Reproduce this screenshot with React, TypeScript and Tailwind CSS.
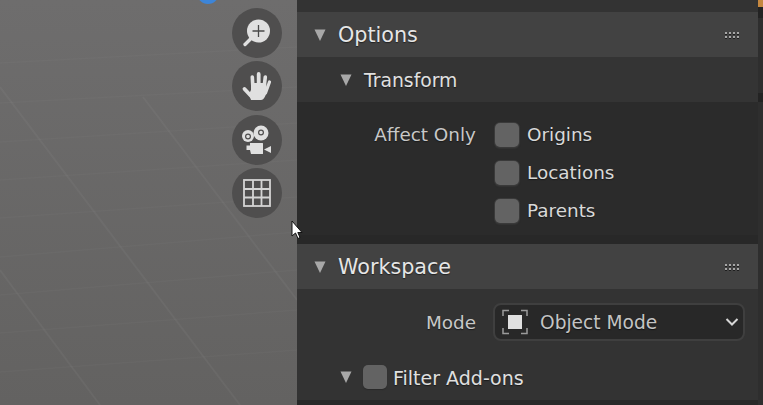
const Tri = () => (
  <svg width="12" height="12" viewBox="0 0 12 12" className="shrink-0">
    <path d="M0.5 0.5 H11.5 L6 12 Z" fill="#a8a8a8" />
  </svg>
);

const Grip = () => (
  <svg width="15" height="8" viewBox="0 0 15 8" className="shrink-0 mt-[2px]">
    {[0, 4, 8, 12].map((x) => (
      <g key={x}>
        <rect x={x} y="0" width="2" height="2" fill="#a6a6a6" />
        <rect x={x} y="2" width="2" height="1" fill="#1e1e1e" />
        <rect x={x} y="4" width="2" height="2" fill="#a6a6a6" />
        <rect x={x} y="6" width="2" height="1" fill="#1e1e1e" />
      </g>
    ))}
  </svg>
);

const Check = ({ ring = true }: { ring?: boolean }) => (
  <span
    className={
      ring
        ? "block w-[24px] h-[24px] shrink-0 rounded-[5px] bg-[#636363] shadow-[0_0_0_1px_#3a3a3a,0_1px_1px_1px_#333333]"
        : "block w-[24px] h-[24px] shrink-0 rounded-[5px] bg-[#636363] shadow-[0_1px_1px_0_#2a2a2a]"
    }
  />
);

const PanelHeader = ({ title }: { title: string }) => (
  <div className="h-[45px] bg-[#424242] flex items-center pl-[17px] pr-[18px]">
    <Tri />
    <span className="ml-[12px] mt-[2px] text-[20.7px] text-[#e6e6e6] [text-shadow:0_1px_1px_#222222]">{title}</span>
    <span className="ml-auto flex"><Grip /></span>
  </div>
);

const CheckRow = ({ label }: { label: string }) => (
  <div className="h-[38px] flex items-center pl-[1px]">
    <Check />
    <span className="ml-[8px] text-[18.4px] text-[#d9d9d9] [text-shadow:0_1px_1px_#1a1a1a]">{label}</span>
  </div>
);

const Nav = ({ children }: { children: React.ReactNode }) => (
  <div className="w-[50px] h-[50px] rounded-full bg-[#4f4e4e] flex items-center justify-center">{children}</div>
);

const hLines = [
  [0, 63, 297, 47], [0, 103, 297, 87], [0, 142, 297, 123], [0, 180, 297, 160], [0, 218, 297, 197],
  [0, 257, 297, 232], [0, 295, 297, 270], [0, 333, 297, 310], [0, 372, 297, 350],
];
const dLines = [
  [0, 87, 240, 405], [0, 270, 100, 405], [143, 97, 297, 300],
];

export default function App() {
  return (
    <div className="w-[763px] h-[405px] flex overflow-hidden font-['DejaVu_Sans',sans-serif]">
      <div className="relative w-[297px] h-full bg-gradient-to-b from-[#6e6d6d] to-[#636261]">
        <svg width="297" height="405" className="absolute inset-0">
          {hLines.map((l, i) => (
            <line key={i} x1={l[0]} y1={l[1]} x2={l[2]} y2={l[3]} stroke="#ffffff" strokeOpacity="0.025" strokeWidth="1.5" />
          ))}
          {dLines.map((l, i) => (
            <line key={i} x1={l[0]} y1={l[1]} x2={l[2]} y2={l[3]} stroke="#ffffff" strokeOpacity="0.04" strokeWidth="2" />
          ))}
        </svg>
        <div className="absolute left-[197px] top-[-18px] w-[22px] h-[22px] rounded-full bg-[#3d85d8]" />
        <div className="absolute left-[232px] top-[8px] flex flex-col gap-[3.33px]">
          <Nav>
            <svg width="32" height="32" viewBox="0 0 32 32">
              <circle cx="17.5" cy="14" r="11.5" fill="#e0e0e0" />
              <path d="M10 21.5 L4 27.5" stroke="#e0e0e0" strokeWidth="3.4" strokeLinecap="round" />
              <path d="M17.5 8 V20 M11.5 14 H23.5" stroke="#4a4a4a" strokeWidth="1.3" />
            </svg>
          </Nav>
          <Nav>
            <svg width="32" height="32" viewBox="0 0 32 32" fill="none" stroke="#e0e0e0" strokeLinecap="round">
              <path d="M10 30 H20 C23 30 25 25 26 21 L25 13 H10 L10 20 L8 24 Z" fill="#e0e0e0" stroke="none" />
              <path d="M12 19 L11.3 7" strokeWidth="3.6" />
              <path d="M17.7 18 V4" strokeWidth="3.8" />
              <path d="M23 18 L24.3 7" strokeWidth="3.6" />
              <path d="M3.5 19 L11 27" strokeWidth="3.8" />
              <path d="M24.5 23 L28.5 12" strokeWidth="3.2" />
            </svg>
          </Nav>
          <Nav>
            <svg width="30" height="30" viewBox="0 0 30 30">
              <circle cx="6" cy="11" r="6" fill="#e0e0e0" />
              <circle cx="19" cy="8" r="7.5" fill="#e0e0e0" />
              <circle cx="6" cy="11.5" r="2.4" fill="none" stroke="#4f4e4e" strokeWidth="1.2" />
              <circle cx="19" cy="7.5" r="2.4" fill="none" stroke="#4f4e4e" strokeWidth="1.2" />
              <path d="M8 18 H20.5 A0.5 0.5 0 0 1 21 18.5 V28.5 A0.5 0.5 0 0 1 20.5 29 H9 L8 25 H4.5 V20.5 H8 Z" fill="#e0e0e0" />
              <path d="M29 21 V28 L22 24.5 Z" fill="#e0e0e0" />
            </svg>
          </Nav>
          <Nav>
            <svg width="28" height="28" viewBox="0 0 28 28" fill="none" stroke="#d4d4d4" strokeWidth="1.8">
              <rect x="1" y="1" width="26" height="26" />
              <path d="M10 1 V27 M18.5 1 V27 M1 10 H27 M1 18.5 H27" />
            </svg>
          </Nav>
        </div>
        <svg width="12" height="20" viewBox="0 0 12 20" className="absolute left-[291px] top-[220px]">
          <path d="M1 1 V16 L4.5 13 L7 18.5 L9 17.5 L6.8 12.5 H11 Z" fill="#ffffff" stroke="#111111" strokeWidth="1" />
        </svg>
      </div>

      <div className="flex-1 h-full flex bg-[#282828]">
        <div className="flex-1 flex flex-col">
          <div className="h-[12px] bg-[#333333]" />
          <PanelHeader title="Options" />
          <div className="h-[45px] bg-[#343434] flex items-center pl-[43px]">
            <Tri />
            <span className="ml-[12px] mt-[3px] text-[18.8px] text-[#e0e0e0] [text-shadow:0_1px_1px_#1a1a1a]">Transform</span>
          </div>
          <div className="h-[133px] bg-[#2b2b2b] flex pt-[14px]">
            <div className="w-[179px] h-[38px] flex items-center justify-end text-[18.4px] text-[#c8c8c8] [text-shadow:0_1px_1px_#1a1a1a]">Affect Only</div>
            <div className="ml-[18px] flex flex-col">
              <CheckRow label="Origins" />
              <CheckRow label="Locations" />
              <CheckRow label="Parents" />
            </div>
          </div>
          <div className="h-[9px] bg-[#282828]" />
          <PanelHeader title="Workspace" />
          <div className="h-[111px] bg-[#333333] flex flex-col">
            <div className="h-[66px] flex items-center">
              <div className="w-[179px] mt-[2px] text-right text-[18.4px] text-[#c8c8c8] [text-shadow:0_1px_1px_#1a1a1a]">Mode</div>
              <div className="ml-[17px] w-[252px] h-[38px] rounded-[8px] bg-[#282828] border-2 border-[#3f3f3f] flex items-center pl-[7px] pr-[4px]">
                <svg width="26" height="26" viewBox="0 0 26 26" className="shrink-0" fill="none">
                  <rect x="6" y="6" width="14" height="14" fill="#e0e0e0" />
                  <path d="M1 7 V1.5 H7 M19 1.5 H25 V7 M25 19 V24.5 H19 M7 24.5 H1 V19" stroke="#9a9a9a" strokeWidth="1.5" />
                </svg>
                <span className="ml-[12px] mt-[2px] text-[18.6px] text-[#c4c4c4] [text-shadow:0_1px_1px_#111111]">Object Mode</span>
                <svg width="14" height="10" viewBox="0 0 14 10" className="ml-auto" fill="none">
                  <path d="M1.5 2 L7 7.5 L12.5 2" stroke="#d6d6d6" strokeWidth="2" />
                </svg>
              </div>
            </div>
            <div className="h-[45px] flex items-center pl-[43px] -mt-[1px]">
              <Tri />
              <span className="ml-[11px]"><Check ring={false} /></span>
              <span className="ml-[6px] mt-[4px] text-[19px] text-[#e0e0e0] [text-shadow:0_1px_1px_#1a1a1a]">Filter Add-ons</span>
            </div>
          </div>
          <div className="flex-1 bg-[#282828]" />
        </div>
        <div className="w-[5px] flex flex-col bg-[#2e2e2e]">
          <div className="h-[7px] bg-[#c5873f]" />
          <div className="h-[11px] bg-[#232323]" />
          <div className="h-[75px] bg-[#2e2e2e]" />
          <div className="h-[9px] bg-[#232323]" />
        </div>
      </div>
    </div>
  );
}
